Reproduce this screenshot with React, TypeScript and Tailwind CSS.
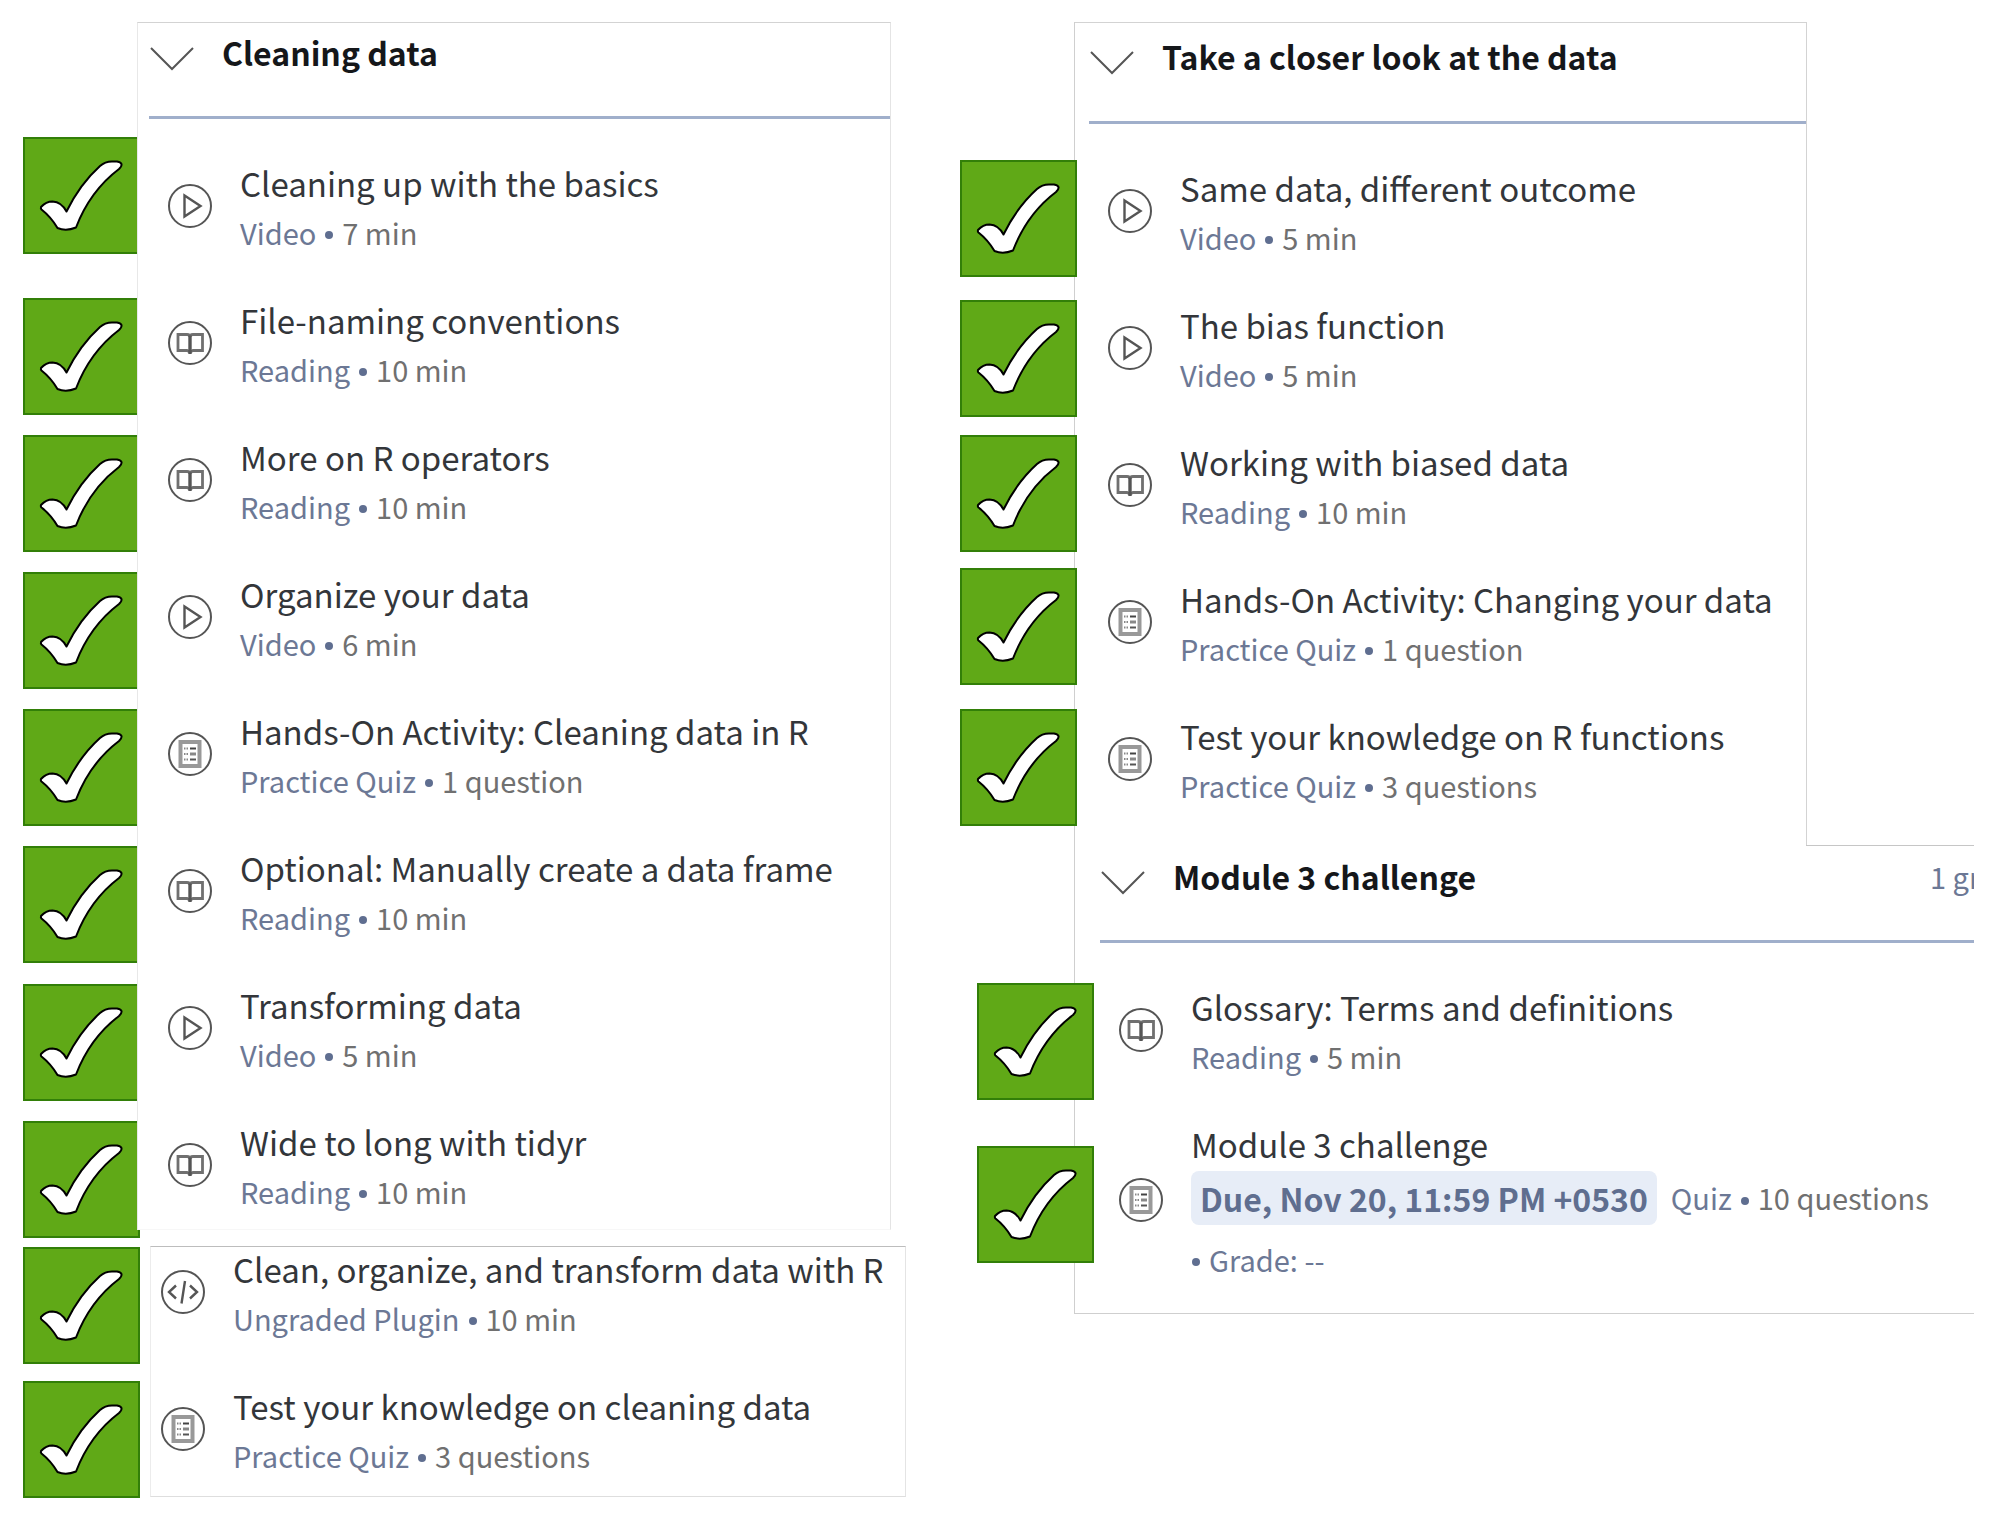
import React from 'react';

type Kind = 'video' | 'reading' | 'quiz' | 'plugin';

interface Lesson {
  title: string;
  kind: Kind;
  type: string;
  detail: string;
}

interface Mark {
  label: string;
  space: string;
}

const cleaning: Lesson[] = [
  { title: 'Cleaning up with the basics', kind: 'video', type: 'Video', detail: '7 min' },
  { title: 'File-naming conventions', kind: 'reading', type: 'Reading', detail: '10 min' },
  { title: 'More on R operators', kind: 'reading', type: 'Reading', detail: '10 min' },
  { title: 'Organize your data', kind: 'video', type: 'Video', detail: '6 min' },
  { title: 'Hands-On Activity: Cleaning data in R', kind: 'quiz', type: 'Practice Quiz', detail: '1 question' },
  { title: 'Optional: Manually create a data frame', kind: 'reading', type: 'Reading', detail: '10 min' },
  { title: 'Transforming data', kind: 'video', type: 'Video', detail: '5 min' },
  { title: 'Wide to long with tidyr', kind: 'reading', type: 'Reading', detail: '10 min' },
];

const cleaningMore: Lesson[] = [
  { title: 'Clean, organize, and transform data with R', kind: 'plugin', type: 'Ungraded Plugin', detail: '10 min' },
  { title: 'Test your knowledge on cleaning data', kind: 'quiz', type: 'Practice Quiz', detail: '3 questions' },
];

const closerLook: Lesson[] = [
  { title: 'Same data, different outcome', kind: 'video', type: 'Video', detail: '5 min' },
  { title: 'The bias function', kind: 'video', type: 'Video', detail: '5 min' },
  { title: 'Working with biased data', kind: 'reading', type: 'Reading', detail: '10 min' },
  { title: 'Hands-On Activity: Changing your data', kind: 'quiz', type: 'Practice Quiz', detail: '1 question' },
  { title: 'Test your knowledge on R functions', kind: 'quiz', type: 'Practice Quiz', detail: '3 questions' },
];

const cleaningSpaces = ['mt-[115px]', 'mt-11', 'mt-5', 'mt-5', 'mt-5', 'mt-5', 'mt-[21px]', 'mt-5'];
const cleaningMoreSpaces = ['mt-px', 'mt-[17px]'];
const closerSpaces = ['mt-[138px]', 'mt-[23px]', 'mt-[18px]', 'mt-4', 'mt-6'];

const marksFor = (lessons: Lesson[], spaces: string[]): Mark[] =>
  lessons.map((l, i) => ({ label: l.title, space: spaces[i] }));

const closerMarks: Mark[] = [
  ...marksFor(closerLook, closerSpaces),
  { label: 'Glossary: Terms and definitions', space: 'mt-[157px] ml-[17px]' },
  { label: 'Module 3 challenge', space: 'mt-[46px] ml-[17px]' },
];

function DoneMark({ label, space }: Mark) {
  return (
    <label className={`grid size-[117px] shrink-0 ${space}`}>
      <input
        type="checkbox"
        defaultChecked
        aria-label={`${label}: done`}
        className="col-start-1 row-start-1 size-[117px] appearance-none border-2 border-[#327f08] bg-[#60a917]"
      />
      <svg viewBox="0 0 117 117" className="pointer-events-none col-start-1 row-start-1 size-[117px]" aria-hidden="true">
        <path
          d="M18 70 Q23 64.5 29.5 64.5 Q38.5 65 43.5 74.500 Q57 47 77 29 Q82 24.500 89 24.500 L94 24.500 Q102 26 96 32 Q67 54 53 90.500 Q43 94.500 34.500 91 Q28 80 18.500 72.500 Q17.500 71.500 18 70 Z"
          fill="#fff"
          stroke="#000"
          strokeWidth="2"
          strokeLinejoin="round"
        />
      </svg>
    </label>
  );
}

function KindIcon({ kind }: { kind: Kind }) {
  return (
    <svg viewBox="0 0 46 46" className="size-[46px] shrink-0" fill="none" stroke="#555" strokeWidth="2" aria-hidden="true">
      <circle cx="23" cy="23" r="21" />
      {kind === 'video' && <path d="M17.500 12.500 V33.500 L33.500 23 Z" strokeWidth="2.400" />}
      {kind === 'reading' && (
        <g>
          <path d="M11 14.500 H20 Q23 14.500 23 17 Q23 14.500 26 14.500 H35.500 V30.500 H26 L23 32 L20 30.500 H11 Z" stroke="#707070" strokeWidth="2.800" />
          <path d="M23 15.500 V34" stroke="#555" strokeWidth="3.400" />
        </g>
      )}
      {kind === 'quiz' && (
        <g>
          <rect x="13.500" y="11" width="19" height="24" stroke="#999" strokeWidth="4" />
          <path d="M17 17.500 H21 M17 23 H21 M17 28.500 H21" stroke="#888" strokeDasharray="1.500 1" />
          <path d="M23 17.500 H29" stroke="#444" />
          <path d="M23 23 H29" stroke="#888" strokeWidth="3" />
          <path d="M23 28.500 H29" stroke="#555" />
        </g>
      )}
      {kind === 'plugin' && <path d="M16 16.500 L9 23 L16 29.500 M30 16.500 L37 23 L30 29.500 M25 12 L21.500 34.500" strokeWidth="2.400" />}
    </svg>
  );
}

function Dot() {
  return <span className="mx-[9px] mt-1.5 size-2 shrink-0 rounded-full bg-[#5f6e90]" />;
}

function LessonRow({ lesson }: { lesson: Lesson }) {
  return (
    <li className="mb-[37px] flex items-center gap-[27px] last:mb-0">
      <KindIcon kind={lesson.kind} />
      <div className="min-w-0 pt-0.5 whitespace-nowrap">
        <a href="#lesson" className="block text-[33px] leading-[50px] text-[#33363a]">
          {lesson.title}
        </a>
        <p className="flex items-center text-[29px] leading-[48px]">
          <span className="text-[#6c7895]">{lesson.type}</span>
          <Dot />
          <span className="text-[#707070]">{lesson.detail}</span>
        </p>
      </div>
    </li>
  );
}

function SectionHeader({ title, className, note }: { title: string; className: string; note?: string }) {
  return (
    <h2 className={`flex items-start border-b-[3px] border-[#a0afcb] ${className}`}>
      <button type="button" aria-expanded="true" className="flex items-center gap-[27px] text-left">
        <svg viewBox="0 0 46 50" className="h-[50px] w-[46px] shrink-0" fill="none" stroke="#555" strokeWidth="2" aria-hidden="true">
          <path d="M2 21 L23 42 L44 21" />
        </svg>
        <span className="whitespace-nowrap text-[32px] leading-[48px] font-bold text-[#15171a]">{title}</span>
      </button>
      {note && (
        <span className="ml-auto w-11 overflow-hidden whitespace-nowrap text-[29px] leading-[50px] font-normal text-[#6c7895]">
          {note}
        </span>
      )}
    </h2>
  );
}

function Marks({ marks, className }: { marks: Mark[]; className: string }) {
  return (
    <div className={`flex shrink-0 flex-col ${className}`}>
      {marks.map((m) => (
        <DoneMark key={m.label} {...m} />
      ))}
    </div>
  );
}

export default function App() {
  return (
    <main className="grid min-h-screen grid-cols-[883fr_1014fr] items-start gap-x-[54px] bg-white pt-[22px] pr-[25px] pl-[23px] font-['Noto_Sans_CJK_SC','Open_Sans',sans-serif]">
      <div className="min-w-0">
        <section className="flex items-start">
          <Marks marks={marksFor(cleaning, cleaningSpaces)} className="w-[117px]" />
          <div className="relative z-10 mr-[15px] -ml-[3px] min-w-0 flex-1 border border-t-[#d3d3d3] border-r-[#e4e4e4] border-b-[#f7f7f7] border-l-[#e8e8e8] bg-white">
            <SectionHeader title="Cleaning data" className="ml-[11px] h-24 pt-1" />
            <ul className="pt-[37px] pb-[14px] pl-[29px]">
              {cleaning.map((l) => (
                <LessonRow key={l.title} lesson={l} />
              ))}
            </ul>
          </div>
        </section>
        <section className="mt-2 flex items-start">
          <Marks marks={marksFor(cleaningMore, cleaningMoreSpaces)} className="w-[117px]" />
          <div className="ml-[10px] min-w-0 flex-1 border border-t-[#bdbdbd] border-r-[#e4e4e4] border-b-[#dedede] border-l-[#ececec]">
            <ul className="-mt-[5px] pb-[17px] pl-[9px]">
              {cleaningMore.map((l) => (
                <LessonRow key={l.title} lesson={l} />
              ))}
            </ul>
          </div>
        </section>
      </div>

      <div className="flex min-w-0 items-start">
        <Marks marks={closerMarks} className="relative z-10 w-[134px]" />
        <div className="-ml-5 min-w-0 flex-1 border-b border-l border-[#cfcfcf]">
          <section className="mr-[167px] border-t border-r border-[#d3d3d3]">
            <SectionHeader title="Take a closer look at the data" className="ml-[14px] h-[101px] pt-2" />
            <ul className="pt-[37px] pb-9 pl-8">
              {closerLook.map((l) => (
                <LessonRow key={l.title} lesson={l} />
              ))}
            </ul>
          </section>
          <section>
            <div className="ml-auto h-px w-[168px] bg-[#c6c6c6]" />
            <SectionHeader title="Module 3 challenge" note="1 gr" className="ml-[25px] h-[97px] pt-[5px]" />
            <ul className="pt-[37px] pb-[30px] pl-[43px]">
              <LessonRow lesson={{ title: 'Glossary: Terms and definitions', kind: 'reading', type: 'Reading', detail: '5 min' }} />
              <li className="flex items-center gap-[27px]">
                <KindIcon kind="quiz" />
                <div className="min-w-0 pt-0.5 whitespace-nowrap">
                  <a href="#challenge" className="block text-[33px] leading-[50px] text-[#33363a]">
                    Module 3 challenge
                  </a>
                  <div className="mt-0.5 flex items-center">
                    <span className="mr-[14px] rounded-lg bg-[#e7edf7] px-[9px] text-[32px] leading-[54px] font-bold text-[#5f6e8f]">
                      Due, Nov 20, 11:59 PM +0530
                    </span>
                    <span className="text-[29px] text-[#6c7895]">Quiz</span>
                    <Dot />
                    <span className="text-[29px] text-[#707070]">10 questions</span>
                  </div>
                  <p className="mt-2.5 -ml-2 flex items-center text-[29px] leading-[48px] text-[#6c7895]">
                    <Dot />
                    Grade: --
                  </p>
                </div>
              </li>
            </ul>
          </section>
        </div>
      </div>
    </main>
  );
}
